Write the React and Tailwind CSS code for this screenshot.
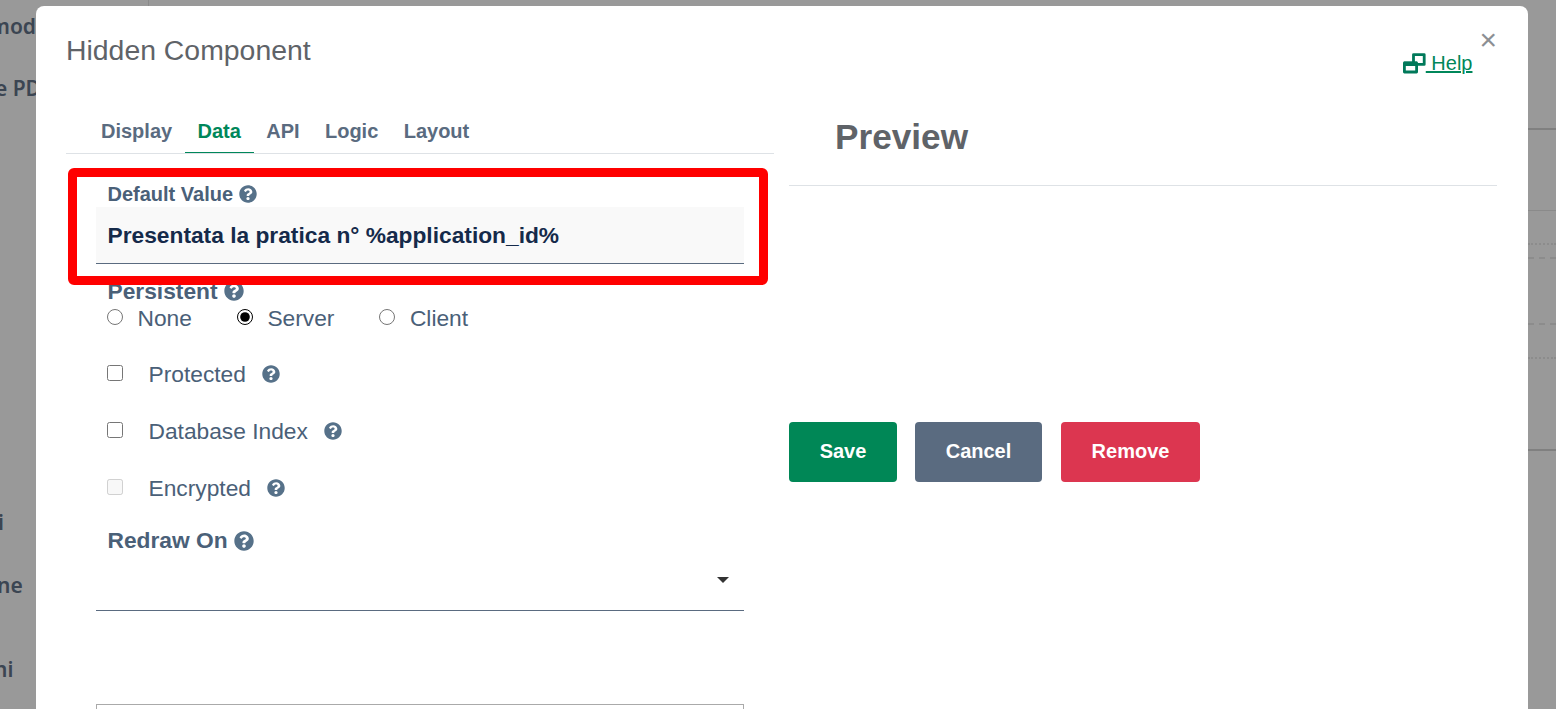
import React from 'react';
import { FaQuestionCircle } from 'react-icons/fa';

const hint = 'text-[#567189] shrink-0';

function HelpDot({ size = 18, className = '' }) {
  return <FaQuestionCircle size={size} className={`${hint} ${className}`} />;
}

function Tab({ label, active }) {
  return (
    <div className={`px-[12.7px] h-[41px] pt-[4px] text-[20px] leading-[30px] font-bold ${active ? 'text-[#00875a] border-b border-[#00875a]' : 'text-[#5a6b80]'}`}>
      {label}
    </div>
  );
}

function Radio({ label, checked, className }) {
  return (
    <label className={`flex items-center ${className}`}>
      <input type="radio" name="persistent" defaultChecked={checked} className="w-4 h-4 m-0 -mt-[2px] accent-black" />
      <span className="ml-[14.5px]">{label}</span>
    </label>
  );
}

function CheckRow({ label, disabled, gap }) {
  return (
    <div className="flex items-center h-[57px] pl-[11px] text-[22.75px] text-[#4a6078]">
      <input type="checkbox" disabled={disabled} className="w-[15.5px] h-[15.5px] m-0 -mt-[2px]" />
      <span className="ml-[26px]">{label}</span>
      <HelpDot className={gap} size={18} />
    </div>
  );
}

export default function App() {
  return (
    <div className="relative h-screen overflow-hidden bg-[#999999] font-['Liberation_Sans',Arial,sans-serif]">
      <div className="h-[6px] ml-[148px] border-l border-[#8a8a8a]" />
      <div className="flex">
        <div className="w-[36px] shrink-0 overflow-hidden text-[21px] font-semibold text-[#3b4552] font-['Noto_Sans',sans-serif] whitespace-nowrap">
          <div className="flex justify-end h-[62px] pt-[5px]">mod</div>
          <div className="flex justify-end h-[437px] pt-[5px] -mr-[5px]">e PD</div>
          <div className="h-[63px] pt-[2px] -ml-[2px]">i</div>
          <div className="h-[86px] pt-[2px] -ml-[3px]">ne</div>
          <div className="-ml-[6px]">ni</div>
        </div>

        <div className="w-[1492px] shrink-0 h-[800px] bg-white rounded-t-[8px]">
          <div className="flex h-[106px] pl-[30px] pr-[31px]">
            <h1 className="text-[28.4px] leading-[34px] mt-[27px] text-[#5f6368]">Hidden Component</h1>
            <a className="ml-auto mt-[44px] h-[26px] flex items-center text-[20px] text-[#00875a] underline">
              <svg width="23" height="21" viewBox="0 0 23 21" className="shrink-0">
                <path d="M10.5 9V1.6H21.2V11.4H15" fill="none" stroke="#00795a" strokeWidth="2.8" strokeLinejoin="round" />
                <path d="M1.4 10H13.6V19H1.4Z" fill="none" stroke="#00795a" strokeWidth="2.8" strokeLinejoin="round" />
                <path d="M1 8.6H14V13H1Z" fill="#00795a" />
              </svg>
              <span className="whitespace-pre"> Help</span>
            </a>
            <div className="ml-[7px] mt-[17px] h-[34px] text-[30px] leading-[34px] text-[#8b8f94]">×</div>
          </div>

          <div className="flex">
            <div className="w-[708px] ml-[30px] shrink-0">
              <div className="flex pl-[22.3px] h-[41px] border-b border-[#dee2e6] box-content">
                <Tab label="Display" />
                <Tab label="Data" active />
                <Tab label="API" />
                <Tab label="Logic" />
                <Tab label="Layout" />
              </div>

              <div className="w-[648px] ml-[30px]">
                <div className="h-[27px] mt-[26px] pl-[11.5px] flex items-center text-[20px] font-bold text-[#4a6078]">
                  Default Value <HelpDot className="ml-[6px]" />
                </div>
                <div className="h-[57px] bg-[#f9f9f9] border-b border-[#5a6b80] pl-[11.5px] flex items-center text-[22.75px] font-bold text-[#152a4a]">
                  Presentata la pratica n° %application_id%
                </div>

                <div className="mt-[13px] h-[28px] pl-[11.5px] flex items-center text-[22.75px] font-bold text-[#4a6078]">
                  Persistent <HelpDot size={20} className="ml-[6px]" />
                </div>
                <div className="flex items-center h-[26px] pl-[11px] text-[22.75px] text-[#4a6078]">
                  <Radio label="None" checked={false} />
                  <Radio label="Server" checked className="ml-[45px]" />
                  <Radio label="Client" checked={false} className="ml-[45px]" />
                </div>

                <div className="mt-[14.5px]">
                  <CheckRow label="Protected" gap="ml-[16.5px]" />
                  <CheckRow label="Database Index" gap="ml-[16.5px]" />
                  <CheckRow label="Encrypted" disabled gap="ml-[16.5px]" />
                </div>

                <div className="mt-[9px] h-[30px] pl-[11.5px] flex items-center text-[22.75px] font-bold text-[#4a6078]">
                  Redraw On <HelpDot size={20} className="ml-[6px]" />
                </div>
                <div className="h-[55px] border-b border-[#5a6b80] flex items-center justify-end pr-[15px] pb-[5px]">
                  <div className="w-0 h-0 border-x-[6px] border-x-transparent border-t-[6px] border-t-[#333333]" />
                </div>

                <div className="mt-[93px] h-[60px] border border-[#aaaaaa]" />
              </div>
            </div>

            <div className="w-[708px] ml-[15px] shrink-0">
              <div className="h-[74px] pl-[46px] border-b border-[#dee2e6] text-[35.2px] font-bold text-[#5f6368] leading-[50px]">
                Preview
              </div>
              <div className="flex mt-[236px] text-[20px] font-bold text-white">
                <button className="w-[108px] h-[60px] pb-[2px] rounded-[4px] bg-[#008756]">Save</button>
                <button className="w-[127px] h-[60px] pb-[2px] ml-[18px] rounded-[4px] bg-[#5a6b80]">Cancel</button>
                <button className="w-[139px] h-[60px] pb-[2px] ml-[19px] rounded-[4px] bg-[#dc3650]">Remove</button>
              </div>
            </div>
          </div>
        </div>

        <div className="flex-1 min-w-0 text-[0px]">
          <div className="h-[124px] border-b-2 border-[#808080]" />
          <div className="h-[81px] border-b border-[#8a8a8a]" />
          <div className="h-[34px] border-b-2 border-dotted border-[#8c8c8c]" />
          <div className="h-[14px] border-b-2 border-dashed border-[#8c8c8c]" />
          <div className="h-[66px] border-b-2 border-dashed border-[#8c8c8c]" />
          <div className="h-[34px] border-b-2 border-dotted border-[#8c8c8c]" />
          <div className="h-[92px] border-b-2 border-[#808080]" />
        </div>
      </div>

      {/* annotation drawn over the screenshot */}
      <div className="absolute left-[68px] top-[168px] w-[700px] h-[117px] border-[9px] border-[#ff0000] rounded-[6px]" />
    </div>
  );
}
